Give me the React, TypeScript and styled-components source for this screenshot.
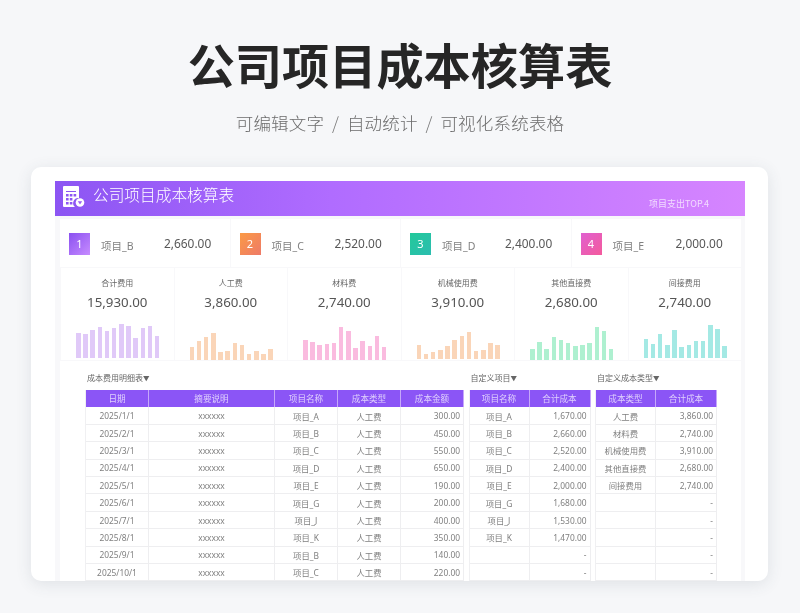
import React from "react";
import styled, { createGlobalStyle } from "styled-components";

const Global = createGlobalStyle`
  html, body { margin: 0; padding: 0; background: #f6f7f9; }
  body { font-family: "Noto Sans", "Noto Sans CJK SC", sans-serif; }
`;

const Page = styled.div`
  width: 800px; height: 613px; overflow: hidden; background: #f6f7f9;
  display: flex; flex-direction: column; align-items: center;
`;
const Title = styled.h1`
  margin: 30px 0 0; height: 68px; line-height: 68px; font-size: 47.2px; font-weight: 700; color: #262626;
  font-family: "Noto Sans CJK SC", sans-serif; filter: blur(0.3px);
`;
const Subtitle = styled.div`
  margin-top: 13px; height: 24px; line-height: 24px; font-size: 17.5px; color: #6c6c6c; letter-spacing: 0.2px;
  font-family: "Noto Sans CJK SC", sans-serif; font-weight: 300; filter: blur(0.25px);
`;
const Slash = styled.span`margin: 0 7.8px; color: #777;`;
const Card = styled.div`
  margin: 32px 0 0 31px; align-self: flex-start; width: 737px; height: 414px; flex: none; box-sizing: border-box;
  background: #fff; border-radius: 10px; box-shadow: 0 3px 16px rgba(60, 70, 90, 0.12);
  padding: 14px 23px 0 24px; overflow: hidden;
`;
const Sheet = styled.div`
  height: 400px; background: #f8f8fa; overflow: hidden; filter: blur(0.3px);
  font-family: "Noto Sans", "Noto Sans CJK SC", sans-serif;
`;
const Banner = styled.div`
  height: 35px; background: linear-gradient(90deg, #8c55f3 0%, #b06cff 40%, #d685ff 100%);
  display: flex; align-items: flex-start; position: relative; color: #fff;
`;
const BannerIcon = styled.svg`width: 22px; height: 21px; margin: 5px 0 0 8px; flex: none;`;
const BannerTitle = styled.div`
  margin: 3px 0 0 8px; font-size: 15.7px; line-height: 21px; font-family: "Noto Sans CJK SC", sans-serif; font-weight: 300;
`;
const BannerNote = styled.div`
  margin: 17px 36px 0 auto; font-size: 9px; line-height: 12px; color: rgba(255,255,255,.72);
  font-family: "Noto Sans CJK SC", sans-serif;
`;
const Body = styled.div`margin: 3px 4px 0 5px; display: flex; flex-direction: column; gap: 1px;`;
const KpiRow = styled.div`display: grid; grid-template-columns: repeat(4, 1fr); gap: 1px; height: 48px;`;
const Kpi = styled.div`background: #fff; display: flex; align-items: center; padding: 2px 0 0 9px;`;
const Badge = styled.div<{ $from: string; $to: string }>`
  width: 21px; height: 22px; flex: none; color: #fff; font-size: 11px; display: flex; align-items: center; justify-content: center;
  padding-bottom: 2px; box-sizing: border-box;
  background: linear-gradient(135deg, ${(p) => p.$from}, ${(p) => p.$to});
`;
const KpiName = styled.div`width: 63px; margin-left: 11px; padding-top: 2px; font-size: 10.5px; color: #808080;`;
const KpiValue = styled.div`font-size: 11.9px; color: #585858; padding-bottom: 2px;`;
const StatRow = styled.div`display: grid; grid-template-columns: repeat(6, 112.5px); gap: 1px; height: 92px; padding-left: 1px;`;
const Stat = styled.div`background: #fff; display: flex; flex-direction: column; align-items: center; position: relative;`;
const StatLabel = styled.div`margin-top: 9px; font-size: 8px; line-height: 11px; color: #666;`;
const StatValue = styled.div`margin-top: 5px; font-size: 13.3px; line-height: 18px; color: #555;`;
const Bars = styled.div<{ $offset: number }>`
  position: absolute; left: 15px; right: 14px; bottom: ${(p) => p.$offset}px; height: 36px;
  display: flex; align-items: flex-end; justify-content: space-between;
`;
const Bar = styled.div<{ $color: string }>`width: 4.6px; background: ${(p) => p.$color};`;
const Detail = styled.div`background: #fff; height: 220px; padding: 10px 0 0 25px; overflow: hidden;`;
const Tables = styled.div`display: flex; gap: 4.5px; align-items: flex-start;`;
const Block = styled.div`display: flex; flex-direction: column;`;
const Caption = styled.div`height: 19px; padding-left: 2px; font-size: 8px; line-height: 14px; color: #666; white-space: nowrap;`;
const Arrow = styled.span`font-size: 6.5px;`;
const Grid = styled.div<{ $cols: string }>`
  display: grid; grid-template-columns: ${(p) => p.$cols}; grid-auto-rows: 17.42px; border-left: 1px solid #f0f0f2;
`;
const Head = styled.div`
  background: #8b55f6; color: rgba(255,255,255,.72); font-size: 8.6px; display: flex; align-items: center; justify-content: center;
  border-right: 1px solid #c6a8fa; box-sizing: border-box;
`;
const Cell = styled.div<{ $right?: boolean }>`
  color: #808080; font-size: 8.4px; display: flex; align-items: center; box-sizing: border-box;
  justify-content: ${(p) => (p.$right ? "flex-end" : "center")}; padding-right: ${(p) => (p.$right ? "3px" : "0")};
  border-right: 1px solid #eeeef0; border-bottom: 1px solid #eeeef0; white-space: nowrap;
`;

const charts = [
  { color: "#e0c9f8", offset: 2, h: [25, 24, 28, 31, 27, 30, 34, 32, 20, 30, 32, 22] },
  { color: "#fad5b8", offset: 0, h: [13, 19, 23, 27, 8, 9, 17, 15, 6, 9, 6, 11] },
  { color: "#fabbdf", offset: 0, h: [20, 18, 15, 16, 17, 33, 29, 12, 19, 14, 24, 13] },
  { color: "#fad5b8", offset: 1, h: [14, 5, 7, 9, 13, 19, 23, 27, 8, 9, 16, 14] },
  { color: "#aef0d0", offset: 0, h: [11, 18, 11, 23, 20, 17, 14, 15, 17, 33, 29, 11] },
  { color: "#a4e9e4", offset: 2, h: [19, 14, 24, 13, 28, 11, 13, 17, 17, 33, 29, 12] },
];
const stats = [
  ["合计费用", "15,930.00"], ["人工费", "3,860.00"], ["材料费", "2,740.00"],
  ["机械使用费", "3,910.00"], ["其他直接费", "2,680.00"], ["间接费用", "2,740.00"],
];
const kpis = [
  { n: 1, name: "项目_B", v: "2,660.00", from: "#8a50f0", to: "#c78cff" },
  { n: 2, name: "项目_C", v: "2,520.00", from: "#fb9a45", to: "#ee7a68" },
  { n: 3, name: "项目_D", v: "2,400.00", from: "#22c99a", to: "#2cbdb0" },
  { n: 4, name: "项目_E", v: "2,000.00", from: "#e060d0", to: "#f45a9c" },
];
const detail = [
  ["2025/1/1", "项目_A", "300.00"], ["2025/2/1", "项目_B", "450.00"], ["2025/3/1", "项目_C", "550.00"],
  ["2025/4/1", "项目_D", "650.00"], ["2025/5/1", "项目_E", "190.00"], ["2025/6/1", "项目_G", "200.00"],
  ["2025/7/1", "项目_J", "400.00"], ["2025/8/1", "项目_K", "350.00"], ["2025/9/1", "项目_B", "140.00"],
  ["2025/10/1", "项目_C", "220.00"],
];
const projects = [
  ["项目_A", "1,670.00"], ["项目_B", "2,660.00"], ["项目_C", "2,520.00"], ["项目_D", "2,400.00"],
  ["项目_E", "2,000.00"], ["项目_G", "1,680.00"], ["项目_J", "1,530.00"], ["项目_K", "1,470.00"], ["", "-"], ["", "-"],
];
const types = [
  ["人工费", "3,860.00"], ["材料费", "2,740.00"], ["机械使用费", "3,910.00"], ["其他直接费", "2,680.00"],
  ["间接费用", "2,740.00"], ["", "-"], ["", "-"], ["", "-"], ["", "-"], ["", "-"],
];

const Pair = ({ title, head, rows }: { title: string; head: string; rows: string[][] }) => (
  <Block>
    <Caption>{title}<Arrow>▼</Arrow></Caption>
    <Grid $cols="60px 61px">
      <Head>{head}</Head>
      <Head>合计成本</Head>
      {rows.map((r, i) => (
        <React.Fragment key={i}>
          <Cell>{r[0]}</Cell>
          <Cell $right>{r[1]}</Cell>
        </React.Fragment>
      ))}
    </Grid>
  </Block>
);

export default function App() {
  return (
    <Page>
      <Global />
      <Title>公司项目成本核算表</Title>
      <Subtitle>可编辑文字<Slash>/</Slash>自动统计<Slash>/</Slash>可视化系统表格</Subtitle>
      <Card>
        <Sheet>
          <Banner>
            <BannerIcon viewBox="0 0 22 21">
              <path fillRule="evenodd" fill="#fff" d="M1 0h14a1 1 0 0 1 1 1v11.2a5 5 0 0 0-4 8.8H1a1 1 0 0 1-1-1V1a1 1 0 0 1 1-1zM3 5v1h10V5zM3 8v2.4h2.6V8zM6.8 8v2.4h2.6V8zM10.600 8v2.4h2.6V8zM3 12v2.400h2.600V12zM6.800 12v2.400h2.600V12zM3 16v2.400h2.600V16zM6.800 16v2.400h2.600V16z" />
              <circle cx="17" cy="16.500" r="4.300" fill="#fff" />
              <path d="M14.800 15.200h4.400L17 18.400z" fill="#9a5cf6" />
            </BannerIcon>
            <BannerTitle>公司项目成本核算表</BannerTitle>
            <BannerNote>项目支出TOP.4</BannerNote>
          </Banner>
          <Body>
            <KpiRow>
              {kpis.map((k) => (
                <Kpi key={k.n}>
                  <Badge $from={k.from} $to={k.to}>{k.n}</Badge>
                  <KpiName>{k.name}</KpiName>
                  <KpiValue>{k.v}</KpiValue>
                </Kpi>
              ))}
            </KpiRow>
            <StatRow>
              {stats.map((s, i) => (
                <Stat key={s[0]}>
                  <StatLabel>{s[0]}</StatLabel>
                  <StatValue>{s[1]}</StatValue>
                  <Bars $offset={charts[i].offset}>
                    {charts[i].h.map((h, j) => (
                      <Bar key={j} $color={charts[i].color} style={{ height: h }} />
                    ))}
                  </Bars>
                </Stat>
              ))}
            </StatRow>
            <Detail>
              <Tables>
                <Block>
                  <Caption>成本费用明细表<Arrow>▼</Arrow></Caption>
                  <Grid $cols="63px 126px 63px 63px 63px">
                    {["日期", "摘要说明", "项目名称", "成本类型", "成本金额"].map((h) => <Head key={h}>{h}</Head>)}
                    {detail.map((r) => (
                      <React.Fragment key={r[0]}>
                        <Cell>{r[0]}</Cell>
                        <Cell>xxxxxx</Cell>
                        <Cell>{r[1]}</Cell>
                        <Cell>人工费</Cell>
                        <Cell $right>{r[2]}</Cell>
                      </React.Fragment>
                    ))}
                  </Grid>
                </Block>
                <Pair title="自定义项目" head="项目名称" rows={projects} />
                <Pair title="自定义成本类型" head="成本类型" rows={types} />
              </Tables>
            </Detail>
          </Body>
        </Sheet>
      </Card>
    </Page>
  );
}
